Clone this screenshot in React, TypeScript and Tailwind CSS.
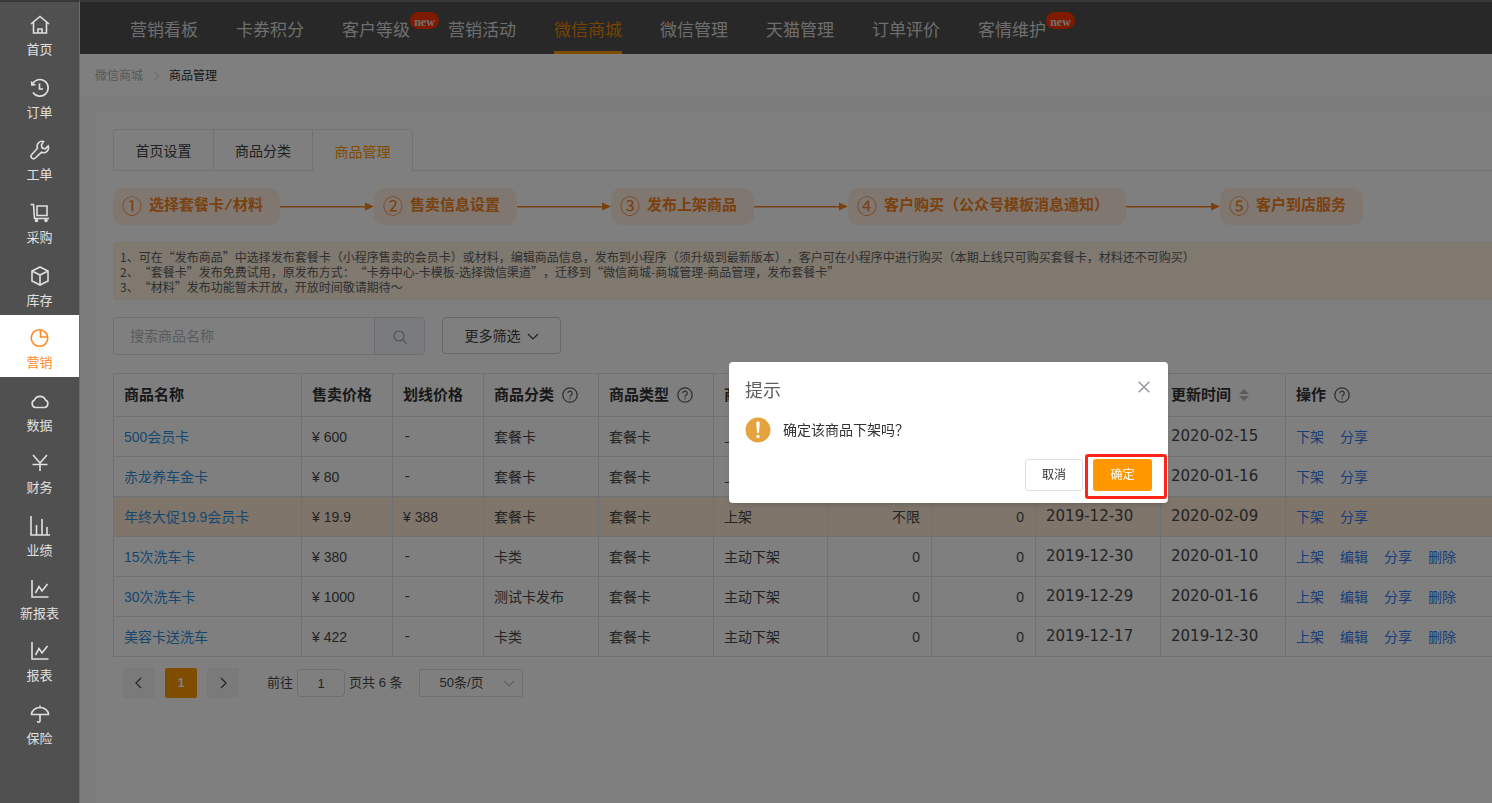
import type { ReactNode } from "react";

type Product = {
  name: string;
  price: string;
  linePrice?: string;
  category: string;
  status: string;
  stock: string;
  sold: string;
  created?: string;
  updated: string;
  listed: boolean;
  highlight?: boolean;
};

const products: Product[] = [
  { name: "500会员卡", price: "¥ 600", category: "套餐卡", status: "上架", stock: "不限", sold: "0", updated: "2020-02-15", listed: true },
  { name: "赤龙养车金卡", price: "¥ 80", category: "套餐卡", status: "上架", stock: "不限", sold: "0", updated: "2020-01-16", listed: true },
  { name: "年终大促19.9会员卡", price: "¥ 19.9", linePrice: "¥ 388", category: "套餐卡", status: "上架", stock: "不限", sold: "0", created: "2019-12-30", updated: "2020-02-09", listed: true, highlight: true },
  { name: "15次洗车卡", price: "¥ 380", category: "卡类", status: "主动下架", stock: "0", sold: "0", created: "2019-12-30", updated: "2020-01-10", listed: false },
  { name: "30次洗车卡", price: "¥ 1000", category: "测试卡发布", status: "主动下架", stock: "0", sold: "0", created: "2019-12-29", updated: "2020-01-16", listed: false },
  { name: "美容卡送洗车", price: "¥ 422", category: "卡类", status: "主动下架", stock: "0", sold: "0", created: "2019-12-17", updated: "2019-12-30", listed: false },
];

const chartIcon = <path d="M2 1v17h16.500M5.500 14L9 7.500l3 4.500 5.500-7" />;

const sideItems: { label: string; icon: ReactNode }[] = [
  { label: "首页", icon: <path d="M1 9l9-7.500L19 9M3.500 7.500V18h13V7.500M8 18v-4h4v4" /> },
  { label: "订单", icon: <><path d="M2.500 6A8.300 8.300 0 1 1 3 14.500" /><path d="M1.500 3.500L2 7l3.500-.5M9.500 5.500V11H13" /></> },
  { label: "工单", icon: <path d="M13.500 1.500a5 5 0 0 0-6 6.700L1.800 14.500a2.300 2.300 0 0 0 3.500 3.500l6.200-5.700a5 5 0 0 0 6.700-6.300l-3 2.800-3-.8-.8-2.900z" /> },
  { label: "采购", icon: <><path d="M.5 1.500h3l1 14H19" /><path d="M7 3h10v9.500H7z" /><circle cx="6.500" cy="17.500" r="1" /><circle cx="16" cy="17.500" r="1" /></> },
  { label: "库存", icon: <path d="M10 1l8 4v10l-8 4-8-4V5zM2 5l8 4 8-4M10 9v10" /> },
  { label: "营销", icon: <><circle cx="9.500" cy="10" r="8.300" /><path d="M10.500 2v7h7.300" /></> },
  { label: "数据", icon: <path d="M5 16.500a4 4 0 0 1-.5-7.500 6 6 0 0 1 11 0 4 4 0 0 1-.5 7.500z" /> },
  { label: "财务", icon: <path d="M3 2l7 8 7-8M10 10v8M2.500 11.500h15" /> },
  { label: "业绩", icon: <path d="M1 0v19h19M6.500 19V9M12 19V3M17 19v-8" /> },
  { label: "新报表", icon: chartIcon },
  { label: "报表", icon: chartIcon },
  { label: "保险", icon: <path d="M1.500 10.500a8.500 7 0 0 1 17 0zM10 3.500V1.500M10 10.500V17a1 1 0 0 1-2.500 0" /> },
];

const navItems = [
  { label: "营销看板" },
  { label: "卡券积分" },
  { label: "客户等级", isNew: true },
  { label: "营销活动" },
  { label: "微信商城", active: true },
  { label: "微信管理" },
  { label: "天猫管理" },
  { label: "订单评价" },
  { label: "客情维护", isNew: true },
];

const steps = [
  { mark: "①", label: "选择套餐卡/材料" },
  { mark: "②", label: "售卖信息设置" },
  { mark: "③", label: "发布上架商品" },
  { mark: "④", label: "客户购买（公众号模板消息通知）" },
  { mark: "⑤", label: "客户到店服务" },
];

const columns: { label: string; width: string; help?: boolean; sort?: boolean }[] = [
  { label: "商品名称", width: "w-[188px]" },
  { label: "售卖价格", width: "w-[91px]" },
  { label: "划线价格", width: "w-[91px]" },
  { label: "商品分类", width: "w-[115px]", help: true },
  { label: "商品类型", width: "w-[115px]", help: true },
  { label: "商品状态", width: "w-[114px]" },
  { label: "库存", width: "w-[104px]" },
  { label: "销量", width: "w-[104px]" },
  { label: "创建时间", width: "w-[125px]", sort: true },
  { label: "更新时间", width: "w-[125px]", sort: true },
  { label: "操作", width: "", help: true },
];

function HelpIcon() {
  return (
    <svg viewBox="0 0 16 16" className="size-4 shrink-0" fill="none" stroke="#606266" strokeWidth="1.3">
      <circle cx="8" cy="8" r="7.200" />
      <path d="M5.800 6.300a2.200 2.200 0 1 1 3.300 1.900c-.8.500-1.100.8-1.100 1.700M8 11v1.300" />
    </svg>
  );
}

function SortIcon() {
  return (
    <svg viewBox="0 0 10 12" className="h-3 w-2.5 shrink-0" fill="#b4b8c0">
      <path d="M5 0l5 5H0zM5 12l5-5H0z" />
    </svg>
  );
}

function Chevron({ className, d }: { className: string; d: string }) {
  return (
    <svg viewBox="0 0 12 12" className={className} fill="none" stroke="currentColor" strokeWidth="1.2">
      <path d={d} />
    </svg>
  );
}

function Sidebar() {
  return (
    <aside className="relative z-20 w-20 shrink-0 border-t-2 border-r border-t-[#383838] border-r-[#6a6a6a] bg-[#505050]">
      <nav className="grid h-[751px] auto-rows-fr">
        {sideItems.map((item) => {
          const active = item.label === "营销";
          return (
            <a
              key={item.label}
              href="#"
              className={`flex flex-col items-center justify-center gap-[5px] text-[13px] leading-5 ${active ? "bg-white text-[#ff8a1e]" : "text-[#e0e0e0]"}`}
            >
              <svg viewBox="0 0 20 20" className="mt-[9px] size-5" fill="none" stroke="currentColor" strokeWidth="1.6">
                {item.icon}
              </svg>
              {item.label}
            </a>
          );
        })}
      </nav>
    </aside>
  );
}

function TopNav() {
  return (
    <nav className="flex h-[54px] gap-[38px] border-t-2 border-[#707070] bg-[#505050] pl-[50px] text-[17px]">
      {navItems.map((item) => (
        <a
          key={item.label}
          href="#"
          className={`relative flex shrink-0 items-center border-b-3 pt-2 ${item.active ? "border-[#ff9800] text-[#e68a00]" : "border-transparent text-[#dcdcdc]"}`}
        >
          {item.label}
          {item.isNew && (
            <span className="absolute top-2.5 left-[68px] flex h-[17px] w-[29px] items-center justify-center rounded-full bg-[#ff3300] pt-0.5 font-['Liberation_Serif',serif] text-xs font-bold text-[#e0e0e0]">
              new
            </span>
          )}
        </a>
      ))}
    </nav>
  );
}

function Steps() {
  return (
    <ol className="mt-[17px] flex items-center text-[#f5821f]">
      {steps.map((step, i) => (
        <li key={step.mark} className="flex shrink-0 items-center">
          {i > 0 && (
            <svg viewBox="0 0 94 10" className="h-2.5 w-[94px]" fill="#f5821f">
              <path d="M0 4h86v1.500H0zM85 .5l9 4-9 4z" />
            </svg>
          )}
          <div className="flex h-[37px] items-center gap-[7px] rounded-[10px] bg-[#ffefe0] pr-[17px] pl-[9px]">
            <span className="text-xl leading-none">{step.mark}</span>
            <span className="pt-0.5 font-['Liberation_Mono','Noto_Sans_CJK_SC',monospace] text-[15px] font-bold">{step.label}</span>
          </div>
        </li>
      ))}
    </ol>
  );
}

function ProductTable() {
  const cell = "border-r border-b border-[#e0e3ea] pr-[11px] pl-[10px] last:border-r-0";
  const dateCell = `${cell} font-['DejaVu_Sans',sans-serif] text-[15px]`;
  return (
    <table className="mt-[18px] w-full table-fixed border-separate border-spacing-0 border-t border-l border-[#e0e3ea] text-left text-sm text-[#484848]">
      <thead>
        <tr className="h-[43px] text-[15px] text-[#333333]">
          {columns.map((col) => (
            <th key={col.label} className={`${cell} ${col.width} font-bold`}>
              <span className="flex items-center gap-2 whitespace-nowrap">
                {col.label}
                {col.help && <HelpIcon />}
                {col.sort && <SortIcon />}
              </span>
            </th>
          ))}
        </tr>
      </thead>
      <tbody>
        {products.map((p) => (
          <tr key={p.name} className={`h-10 ${p.highlight ? "bg-[#ffebd7]" : ""}`}>
            <td className={cell}>
              <a href="#" className="text-[#2d8fdd]">{p.name}</a>
            </td>
            <td className={cell}>{p.price}</td>
            <td className={cell}>
              {p.linePrice ?? <span className="font-['Liberation_Mono',monospace]">-</span>}
            </td>
            <td className={cell}>{p.category}</td>
            <td className={cell}>套餐卡</td>
            <td className={cell}>{p.status}</td>
            <td className={`${cell} text-right`}>{p.stock}</td>
            <td className={`${cell} text-right`}>{p.sold}</td>
            <td className={dateCell}>{p.created}</td>
            <td className={dateCell}>{p.updated}</td>
            <td className={cell}>
              <span className="flex gap-4 text-[#2f7cf0]">
                {(p.listed ? ["下架", "分享"] : ["上架", "编辑", "分享", "删除"]).map((action) => (
                  <a key={action} href="#" className="shrink-0">{action}</a>
                ))}
              </span>
            </td>
          </tr>
        ))}
      </tbody>
    </table>
  );
}

function Pagination() {
  const pageButton = "flex h-[30px] w-8 items-center justify-center rounded-xs";
  return (
    <div className="mt-[11px] flex items-center pl-[10px] text-[13px] text-[#484848]">
      <div className="flex gap-[10px]">
        <button aria-label="上一页" className={`${pageButton} bg-[#f4f4f5]`}>
          <Chevron className="size-3" d="M8 1L3 6l5 5" />
        </button>
        <button className={`${pageButton} bg-[#ff9800] font-bold text-white`}>1</button>
        <button aria-label="下一页" className={`${pageButton} bg-[#f4f4f5]`}>
          <Chevron className="size-3" d="M4 1l5 5-5 5" />
        </button>
      </div>
      <label htmlFor="page" className="ml-7">前往</label>
      <input id="page" defaultValue="1" className="mx-1 h-7 w-12 rounded-sm border border-[#dcdfe6] text-center" />
      <span>页共 6 条</span>
      <span className="relative ml-[17px]">
        <select aria-label="每页条数" className="h-7 w-[104px] appearance-none rounded-xs border border-[#dcdfe6] pl-[19px]">
          <option>50条/页</option>
        </select>
        <Chevron className="pointer-events-none absolute top-2 right-2 size-3 text-[#c0c4cc]" d="M1 4l5 5 5-5" />
      </span>
    </div>
  );
}

function ConfirmDialog() {
  return (
    <div
      role="dialog"
      aria-labelledby="dialog-title"
      className="fixed top-[362px] left-[729px] z-30 w-[439px] rounded-sm bg-white px-4 pt-[17px] pb-3 shadow-md"
    >
      <div className="flex h-6 items-start justify-between">
        <h2 id="dialog-title" className="text-lg leading-6 text-[#606060]">提示</h2>
        <button aria-label="关闭" className="-mt-1 -mr-1 p-1">
          <svg viewBox="0 0 12 12" className="size-4 text-[#909399]" fill="none" stroke="currentColor">
            <path d="M2 2l8 8M10 2l-8 8" />
          </svg>
        </button>
      </div>
      <div className="mt-[14px] flex items-center gap-3 text-sm text-[#303133]">
        <svg viewBox="0 0 26 26" className="size-[26px]">
          <circle cx="13" cy="13" r="12.500" fill="#e6a23c" />
          <path d="M11.300 6a1.700 1.700 0 0 1 3.400 0l-.7 10h-2z" fill="white" />
          <circle cx="13" cy="19.500" r="1.700" fill="white" />
        </svg>
        确定该商品下架吗？
      </div>
      <div className="mt-4 flex justify-end gap-[10px] text-xs">
        <button className="h-8 w-[58px] rounded-[3px] border border-[#dcdfe6] text-[#303133]">取消</button>
        <span className="relative">
          <button className="h-8 w-[59px] rounded-[3px] bg-[#ff9800] text-white">确定</button>
          <span className="pointer-events-none absolute -top-[5px] -right-[15px] -bottom-2 -left-2 rounded-[3px] border-3 border-[#ff2418]" />
        </span>
      </div>
    </div>
  );
}

export default function App() {
  return (
    <div lang="zh-CN" className="flex min-h-screen overflow-hidden bg-[#f8f8f8] font-['Liberation_Sans','Noto_Sans_CJK_SC',sans-serif]">
      <Sidebar />
      <div className="min-w-0 flex-1">
        <TopNav />
        <div className="flex h-[42px] items-center gap-2 bg-white pt-0.5 pl-[15px] text-xs">
          <a href="#" className="text-[#b0b0b0]">微信商城</a>
          <Chevron className="size-[10px] text-[#c0c4cc]" d="M4 1l5 5-5 5" />
          <span className="text-[#303133]">商品管理</span>
        </div>
        <main className="mt-4 ml-4 min-h-[691px] bg-white pt-[17px] pl-[17px]">
          <div className="flex h-[42px] text-sm text-[#404040]">
            <button className="w-[100px] rounded-tl-sm border border-r-0 border-[#e4e7ed] pt-0.5">首页设置</button>
            <button className="w-[99px] border border-r-0 border-[#e4e7ed] pt-0.5">商品分类</button>
            <button className="w-[101px] rounded-tr-sm border border-b-0 border-[#e4e7ed] pt-0.5 text-[#ff9800]">商品管理</button>
            <div className="flex-1 border-b border-[#e4e7ed]" />
          </div>
          <Steps />
          <div className="mt-[17px] rounded-l-sm border border-r-0 border-[#faecd8] bg-[#fff2de] px-1.5 pt-1.5 pb-[5px] font-['Noto_Sans_CJK_SC',sans-serif] text-xs leading-[15px] text-[#606060] [text-spacing-trim:space-all]">
            <p>1、可在“发布商品”中选择发布套餐卡（小程序售卖的会员卡）或材料，编辑商品信息，发布到小程序（须升级到最新版本），客户可在小程序中进行购买（本期上线只可购买套餐卡，材料还不可购买）</p>
            <p>2、“套餐卡”发布免费试用，原发布方式：“卡券中心-卡模板-选择微信渠道”，迁移到“微信商城-商城管理-商品管理，发布套餐卡”</p>
            <p>3、“材料”发布功能暂未开放，开放时间敬请期待～</p>
          </div>
          <div className="mt-[17px] flex gap-[17px] text-sm">
            <div className="flex h-[38px] w-[312px] rounded-sm border border-[#dcdfe6]">
              <input aria-label="搜索商品名称" placeholder="搜索商品名称" className="min-w-0 flex-1 pl-4 placeholder:text-[#b4b8c0]" />
              <button aria-label="搜索" className="flex w-[50px] items-center justify-center border-l border-[#dcdfe6] bg-[#f5f7fa] pt-0.5 text-[#a0a4ac]">
                <svg viewBox="0 0 14 14" className="size-3.5" fill="none" stroke="currentColor" strokeWidth="1.2">
                  <circle cx="6" cy="6" r="5" />
                  <path d="M9.700 9.700l4 4" />
                </svg>
              </button>
            </div>
            <button className="flex h-[37px] w-[119px] items-center justify-center gap-1.5 rounded-sm border border-[#d0d0d0] text-[#404040]">
              更多筛选
              <Chevron className="size-3" d="M1 4l5 5 5-5" />
            </button>
          </div>
          <ProductTable />
          <Pagination />
        </main>
      </div>
      <div className="fixed inset-0 z-10 bg-black/50" />
      <ConfirmDialog />
    </div>
  );
}
